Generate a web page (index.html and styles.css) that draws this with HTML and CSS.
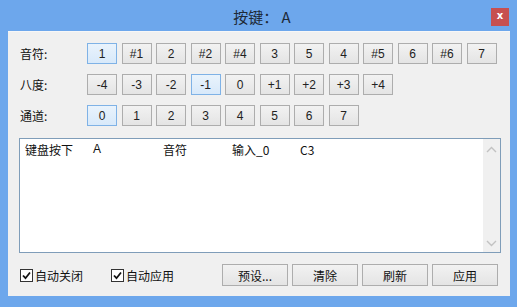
FILE: index.html
```html
<!DOCTYPE html>
<html>
<head>
<meta charset="utf-8">
<link rel="stylesheet" href="styles.css">
</head>
<body>
<div class="window">
  <div class="titlebar">
    <div></div>
    <div class="title">按键： A</div>
    <div class="close">x</div>
  </div>
  <div class="panel">
    <div class="row">
      <div class="label">音符:</div>
      <div class="btns">
        <span class="btn sel">1</span><span class="btn">#1</span><span class="btn">2</span><span class="btn">#2</span><span class="btn">#4</span><span class="btn">3</span><span class="btn">5</span><span class="btn">4</span><span class="btn">#5</span><span class="btn">6</span><span class="btn">#6</span><span class="btn">7</span>
      </div>
    </div>
    <div class="row">
      <div class="label">八度:</div>
      <div class="btns">
        <span class="btn">-4</span><span class="btn">-3</span><span class="btn">-2</span><span class="btn sel">-1</span><span class="btn">0</span><span class="btn">+1</span><span class="btn">+2</span><span class="btn">+3</span><span class="btn">+4</span>
      </div>
    </div>
    <div class="row">
      <div class="label">通道:</div>
      <div class="btns">
        <span class="btn sel">0</span><span class="btn">1</span><span class="btn">2</span><span class="btn">3</span><span class="btn">4</span><span class="btn">5</span><span class="btn">6</span><span class="btn">7</span>
      </div>
    </div>
    <div class="log">
      <div class="log-body">
        <div class="line"><span class="c1">键盘按下</span><span class="c2">A</span><span class="c3">音符</span><span class="c4">输入_0</span><span>C3</span></div>
      </div>
      <div class="scroll">
        <svg width="11" height="7" viewBox="0 0 11 7"><path d="M1 6 L5.5 1.5 L10 6" fill="none" stroke="#c2c2c2" stroke-width="1.4"/></svg>
        <svg width="11" height="7" viewBox="0 0 11 7"><path d="M1 1 L5.5 5.5 L10 1" fill="none" stroke="#c2c2c2" stroke-width="1.4"/></svg>
      </div>
    </div>
    <div class="bottom">
      <label class="check"><span class="box"><svg width="11" height="11" viewBox="0 0 11 11"><path d="M2 5.5 L4.5 8.2 L9 2.5" fill="none" stroke="#111" stroke-width="1.8"/></svg></span>自动关闭</label>
      <label class="check second"><span class="box"><svg width="11" height="11" viewBox="0 0 11 11"><path d="M2 5.5 L4.5 8.2 L9 2.5" fill="none" stroke="#111" stroke-width="1.8"/></svg></span>自动应用</label>
      <div class="actions">
        <span class="abtn">预设...</span><span class="abtn">清除</span><span class="abtn">刷新</span><span class="abtn">应用</span>
      </div>
    </div>
  </div>
</div>
</body>
</html>
```

FILE: styles.css
```css
html, body {
  margin: 0;
  padding: 0;
}
body {
  width: 517px;
  height: 307px;
  overflow: hidden;
  font-family: "Liberation Sans", "Noto Sans CJK SC", sans-serif;
  font-size: 12px;
  color: #1a1a1a;
}
.window {
  width: 517px;
  height: 307px;
  box-sizing: border-box;
  background: #6da7ec;
  padding: 0 7px 11px 8px;
  display: flex;
  flex-direction: column;
}
.titlebar {
  height: 32px;
  display: grid;
  grid-template-columns: 1fr auto 1fr;
  align-items: start;
}
.title {
  font-family: "Noto Sans CJK SC", sans-serif;
  font-size: 15px;
  color: #1e2a38;
  line-height: 18px;
  padding-top: 8px;
  margin-left: 6px;
}
.close {
  justify-self: end;
  margin-top: 8px;
  margin-right: 1px;
  width: 18px;
  height: 18px;
  background: #c75050;
  color: #fff;
  font-family: "DejaVu Sans", sans-serif;
  font-weight: bold;
  font-size: 10px;
  line-height: 16px;
  text-align: center;
}
.panel {
  flex: 1;
  background: #f0f0f0;
  border-top: 1px solid #f7f7f7;
  box-sizing: border-box;
  padding: 11px 9px 10px 11px;
  display: flex;
  flex-direction: column;
}
.row {
  display: flex;
  align-items: center;
  height: 21px;
  margin-bottom: 10px;
}
.label {
  width: 67px;
  padding-left: 1px;
  box-sizing: border-box;
  font-family: "Noto Sans CJK SC", sans-serif;
  font-size: 12px;
  color: #111;
}
.label, .btns { flex: none; }
.btns {
  display: flex;
  gap: 4.5px;
  margin-left: 1px;
}
.btn {
  width: 30px;
  height: 21px;
  box-sizing: border-box;
  border: 1px solid #adadad;
  background: linear-gradient(#f2f2f2, #e4e4e4);
  display: flex;
  align-items: center;
  justify-content: center;
  font-size: 12px;
  color: #222;
}
.btn.sel {
  border-color: #7fb2e6;
  background: linear-gradient(#e9f3fc, #d8e9fa);
}
.log {
  margin-top: 2px;
  height: 115px;
  width: 482px;
  box-sizing: border-box;
  border: 1px solid #7f9db9;
  background: #fff;
  display: flex;
}
.log-body {
  flex: 1;
  padding: 2px 0 0 5px;
}
.line {
  display: flex;
  font-family: "Noto Sans CJK SC", sans-serif;
  font-size: 12px;
  line-height: 17px;
  color: #111;
}
.line .c1 { width: 68px; }
.line .c2 { width: 70px; font-family: "Liberation Sans", sans-serif; }
.line .c3 { width: 69px; }
.line .c4 { width: 68px; }
.scroll {
  width: 17px;
  background: #f0f0f0;
  display: flex;
  flex-direction: column;
  justify-content: space-between;
  align-items: center;
  padding: 7px 0 5px;
}
.bottom {
  margin-top: 11px;
  display: flex;
  align-items: center;
  height: 22px;
}
.check {
  display: flex;
  align-items: center;
  font-family: "Noto Sans CJK SC", sans-serif;
  font-size: 12px;
  color: #111;
  margin-left: 1px;
}
.check.second { margin-left: 28px; }
.box {
  width: 13px;
  height: 13px;
  box-sizing: border-box;
  border: 1px solid #333;
  background: #fff;
  display: flex;
  align-items: center;
  justify-content: center;
  margin-right: 2px;
}
.actions {
  margin-left: auto;
  display: flex;
  gap: 4px;
  margin-right: 3px;
}
.abtn {
  width: 66px;
  height: 22px;
  box-sizing: border-box;
  border: 1px solid #adadad;
  background: linear-gradient(#f2f2f2, #e4e4e4);
  display: flex;
  align-items: center;
  justify-content: center;
  font-family: "Noto Sans CJK SC", sans-serif;
  font-size: 12px;
  color: #111;
}
```
